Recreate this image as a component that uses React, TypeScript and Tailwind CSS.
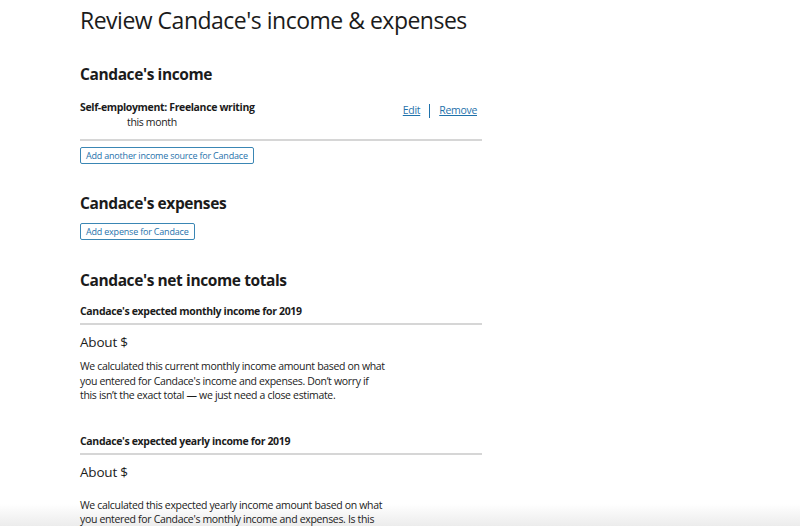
export default function App() {
  const font = { fontFamily: '"Open Sans", "Noto Sans", sans-serif' };
  return (
    <div
      className="relative h-[526px] w-[800px] overflow-hidden bg-white text-[#1b1b1b]"
      style={font}
    >
      {/* soft fade at the bottom of the window, behind the text */}
      <div className="pointer-events-none absolute bottom-0 left-0 h-[22px] w-full bg-gradient-to-b from-white/0 to-[#ececec]" />

      <div className="relative w-[402px] ml-[80px] pt-[3px]">
        <h1 className="whitespace-nowrap text-[23px] leading-[34px] font-normal tracking-[-0.5px]">
          Review Candace's income &amp; expenses
        </h1>

        {/* Income */}
        <h2 className="mt-[25px] text-[15.5px] leading-[24px] font-bold tracking-[-0.4px]">
          Candace's income
        </h2>
        <div className="mt-[14px] flex items-start justify-between border-b-2 border-[#d6d6d6] pb-[9px]">
          <div className="text-[10.5px] leading-[15px] tracking-[-0.35px]">
            <div className="font-bold">Self-employment: Freelance writing</div>
            <div className="pl-[47px]">this month</div>
          </div>
          <div className="mt-[3px] flex items-center text-[10.5px] leading-[15px] tracking-[-0.3px] text-[#1f72ab]">
            <a className="underline">Edit</a>
            <span className="mx-[9px] h-[14px] w-px bg-[#1f72ab]" />
            <a className="underline mr-[5px]">Remove</a>
          </div>
        </div>
        <button className="mt-[2px] rounded-[2px] border border-[#3a86b4] px-[5px] py-0 text-[9px] leading-[15px] tracking-[-0.2px] text-[#1f72ab]">
          Add another income source for Candace
        </button>

        {/* Expenses */}
        <h2 className="mt-[26px] text-[15.5px] leading-[24px] font-bold tracking-[-0.4px]">
          Candace's expenses
        </h2>
        <button className="mt-[8px] rounded-[2px] border border-[#3a86b4] px-[5px] py-0 text-[9px] leading-[15px] tracking-[-0.2px] text-[#1f72ab]">
          Add expense for Candace
        </button>

        {/* Totals */}
        <h2 className="mt-[27px] text-[15.5px] leading-[24px] font-bold tracking-[-0.4px]">
          Candace's net income totals
        </h2>
        <div className="mt-[12px] border-b-2 border-[#d6d6d6] pb-[4px] text-[10.5px] leading-[15px] font-bold tracking-[-0.35px]">
          Candace's expected monthly income for 2019
        </div>
        <div className="mt-[7px] text-[13.5px] leading-[20px] tracking-[-0.2px]">About $</div>
        <p className="mt-[7px] text-[10.5px] leading-[14.5px] tracking-[-0.33px]">
          We calculated this current monthly income amount based on what
          <br />
          you entered for Candace's income and expenses. Don’t worry if
          <br />
          this isn’t the exact total — we just need a close estimate.
        </p>

        <div className="mt-[31px] border-b-2 border-[#d6d6d6] pb-[4px] text-[10.5px] leading-[15px] font-bold tracking-[-0.35px]">
          Candace's expected yearly income for 2019
        </div>
        <div className="mt-[7px] text-[13.5px] leading-[20px] tracking-[-0.2px]">About $</div>
        <p className="mt-[16px] text-[10.5px] leading-[14.5px] tracking-[-0.33px]">
          We calculated this expected yearly income amount based on what
          <br />
          you entered for Candace's monthly income and expenses. Is this
        </p>
      </div>
    </div>
  );
}
